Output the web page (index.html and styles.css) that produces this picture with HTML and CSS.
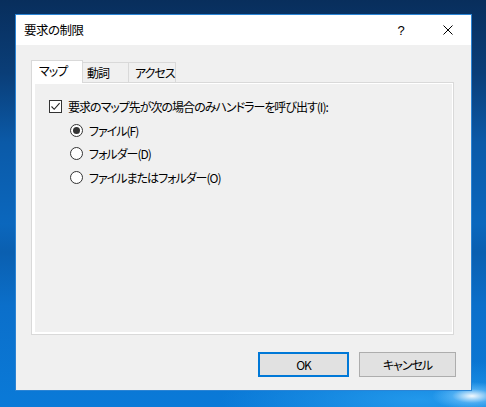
FILE: index.html
```html
<!DOCTYPE html>
<html lang="ja">
<head>
<meta charset="utf-8">
<title>要求の制限</title>
<link rel="stylesheet" href="styles.css">
</head>
<body>
<div class="desktop">
  <div class="dialog">
    <div class="titlebar">
      <div class="title">要求の制限</div>
      <div class="tbtn help">?</div>
      <div class="tbtn close">
        <svg width="10" height="10" viewBox="0 0 10 10"><path d="M0.5 0.5 L9.5 9.5 M9.5 0.5 L0.5 9.5" stroke="#000" stroke-width="1" fill="none"/></svg>
      </div>
    </div>
    <div class="content">
      <div class="tabs">
        <div class="tab selected">マップ</div>
        <div class="tab">動詞</div>
        <div class="tab">アクセス</div>
      </div>
      <div class="panel">
        <div class="page">
          <div class="row">
            <span class="checkbox">
              <svg width="11" height="11" viewBox="0 0 11 11"><path d="M1.5 5.5 L4.2 8.3 L9.6 2.2" stroke="#222" stroke-width="1.1" fill="none"/></svg>
            </span>
            <span class="label">要求のマップ先が次の場合のみハンドラーを呼び出す(I):</span>
          </div>
          <div class="row indent">
            <span class="radio checked"></span>
            <span class="label">ファイル(F)</span>
          </div>
          <div class="row indent">
            <span class="radio"></span>
            <span class="label">フォルダー(D)</span>
          </div>
          <div class="row indent">
            <span class="radio"></span>
            <span class="label">ファイルまたはフォルダー(O)</span>
          </div>
        </div>
      </div>
      <div class="footer">
        <div class="button default">OK</div>
        <div class="button cancel">キャンセル</div>
      </div>
    </div>
  </div>
</div>
</body>
</html>
```

FILE: styles.css
```css
html, body {
  margin: 0;
  padding: 0;
}
body {
  width: 486px;
  height: 407px;
  overflow: hidden;
  font-family: "Noto Sans CJK JP", "Noto Sans", sans-serif;
  font-size: 12px;
  letter-spacing: -1px;
  color: #000;
  font-feature-settings: "palt";
}
.desktop {
  width: 486px;
  height: 407px;
  box-sizing: border-box;
  padding: 14px 0 0 15px;
  background:
    radial-gradient(ellipse 40px 14px at 472px 396px, rgba(255,255,255,0.95), rgba(120,200,255,0.5) 50%, rgba(0,120,215,0) 100%),
    radial-gradient(ellipse 200px 40px at 420px 400px, rgba(40,160,240,0.8), rgba(0,120,215,0) 100%),
    linear-gradient(180deg, #082e5c 0%, #0a3e78 18%, #0b5aa8 35%, #0b67bd 55%, #0a5fb0 62%, #0b6fca 75%, #0a7ad8 100%);
}
.dialog {
  width: 457px;
  height: 377px;
  box-sizing: border-box;
  border: 1px solid #2b84d4;
  background: #f0f0f0;
  display: flex;
  flex-direction: column;
}
.titlebar {
  height: 30px;
  flex: none;
  background: #fff;
  display: flex;
  align-items: center;
}
.title {
  flex: 1;
  padding-left: 8px;
  font-size: 12.5px;
  letter-spacing: -0.5px;
  line-height: 30px;
}
.tbtn {
  width: 45px;
  height: 30px;
  display: flex;
  align-items: center;
  justify-content: center;
  letter-spacing: 0;
}
.help {
  font-family: "Liberation Sans", sans-serif;
  font-size: 13px;
  padding-right: 3px;
  box-sizing: border-box;
}
.close {
  width: 46px;
}
.content {
  flex: 1;
  padding: 15px 17px 0 15px;
  display: flex;
  flex-direction: column;
}
.tabs {
  display: flex;
  align-items: flex-end;
  height: 23px;
  margin-bottom: -1px;
  position: relative;
  z-index: 1;
}
.tab {
  box-sizing: border-box;
  height: 20px;
  margin-bottom: 1px;
  border-top: 1px solid #d9d9d9;
  border-right: 1px solid #d9d9d9;
  background: #f0f0f0;
  padding: 0 4px;
  line-height: 19px;
  white-space: nowrap;
}
.tab:nth-child(2) { width: 46px; }
.tab:nth-child(3) { width: 47px; padding-left: 6px; }
.tab.selected {
  width: 52px;
  height: 23px;
  margin-bottom: 0;
  border-left: 1px solid #d9d9d9;
  background: #fff;
  padding: 0 7px;
  line-height: 19px;
}
.panel {
  height: 253px;
  box-sizing: border-box;
  border: 1px solid #d9d9d9;
  background: #fff;
  padding: 1px 1px 2px 3px;
  flex: none;
}
.page {
  height: 100%;
  background: #f0f0f0;
  box-sizing: border-box;
  padding: 16px 0 0 14px;
  display: flex;
  flex-direction: column;
  gap: 10.5px;
}
.row {
  display: flex;
  align-items: center;
  height: 13px;
}
.row.indent {
  padding-left: 21px;
}
.label {
  margin-left: 6px;
  line-height: 13px;
  white-space: nowrap;
}
.checkbox {
  width: 13px;
  height: 13px;
  box-sizing: border-box;
  border: 1px solid #333;
  background: #fff;
  display: flex;
  align-items: center;
  justify-content: center;
  flex: none;
}
.radio {
  width: 13px;
  height: 13px;
  box-sizing: border-box;
  border: 1px solid #333;
  border-radius: 50%;
  background: #fff;
  flex: none;
  display: flex;
  align-items: center;
  justify-content: center;
}
.radio.checked::after {
  content: "";
  width: 7px;
  height: 7px;
  border-radius: 50%;
  background: #333;
}
.footer {
  display: flex;
  justify-content: flex-end;
  gap: 10px;
  margin-top: 17px;
  margin-right: -2px;
}
.button {
  height: 25px;
  box-sizing: border-box;
  background: #e1e1e1;
  display: flex;
  align-items: center;
  justify-content: center;
}
.button.default {
  width: 91px;
  border: 2px solid #0078d7;
}
.button.cancel {
  width: 97px;
  border: 1px solid #adadad;
}
```
